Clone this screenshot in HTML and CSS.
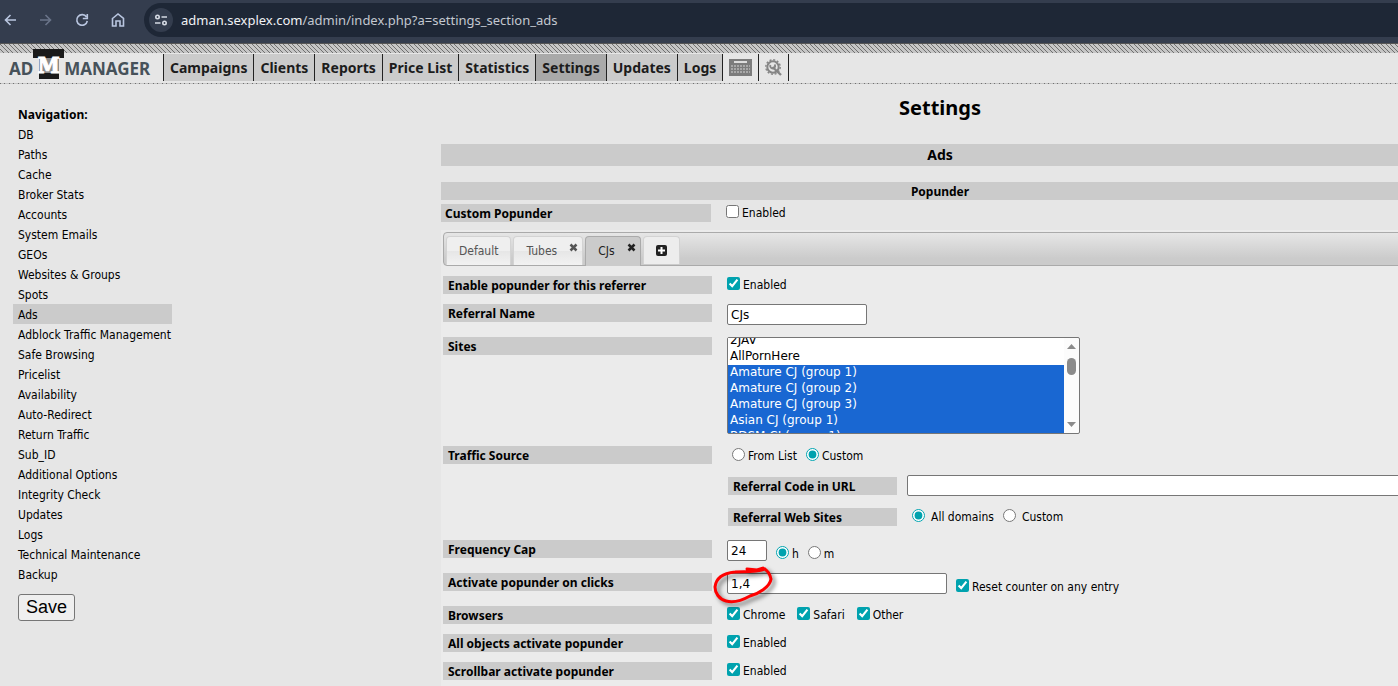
FILE: index.html
```html
<!DOCTYPE html>
<html lang="en">
<head>
    <meta charset="UTF-8">
    <meta name="viewport" content="width=device-width, initial-scale=1.0">
    <title>Ad Manager - Settings</title>
    <link rel="stylesheet" href="styles.css">
</head>
<body>
    <div class="browser-bar">
        <button class="browser-btn" aria-label="Back">
            <svg width="16" height="16" viewBox="0 0 16 16"><path d="M14 8H3.500M8.500 3L3.500 8l5 5"/></svg>
        </button>
        <button class="browser-btn disabled" aria-label="Forward">
            <svg width="16" height="16" viewBox="0 0 16 16"><path d="M2 8h10.500M7.500 3l5 5-5 5"/></svg>
        </button>
        <button class="browser-btn" aria-label="Reload">
            <svg width="16" height="16" viewBox="0 0 16 16"><path d="M12.500 5A5.300 5.300 0 1 0 13.300 9M13.300 2v4.500H8.800"/></svg>
        </button>
        <button class="browser-btn" aria-label="Home">
            <svg width="16" height="16" viewBox="0 0 16 16"><path d="M2.500 6.500L8 2l5.500 4.500V14H10V9H6v5H2.500z"/></svg>
        </button>
        <div class="url-bar">
            <button class="site-info" aria-label="Site information">
                <svg width="14" height="14" viewBox="0 0 14 14"><circle cx="3.500" cy="4" r="1.700"/><path d="M7.500 4H13M1 10h5.500"/><circle cx="10.500" cy="10" r="1.700"/></svg>
            </button>
            <span class="url"><b>adman.sexplex.com</b>/admin/index.php?a=settings_section_ads</span>
        </div>
    </div>
    <div class="hatch"></div>

    <header class="header">
        <a class="logo" href="#" aria-label="Ad Manager">
            <span>AD</span>
            <span class="logo-m">M</span>
            <span>MANAGER</span>
        </a>
        <nav class="menu">
            <a href="#">Campaigns</a>
            <a href="#">Clients</a>
            <a href="#">Reports</a>
            <a href="#">Price List</a>
            <a href="#">Statistics</a>
            <a href="#" class="active">Settings</a>
            <a href="#">Updates</a>
            <a href="#">Logs</a>
            <a href="#" class="icon" aria-label="Keyboard">
                <svg width="23" height="17" viewBox="0 0 23 17" shape-rendering="crispEdges">
                    <path fill="#7c7c7c" d="M0 0h23v17H0z"/>
                    <path fill="#ddd" d="M5 2h13v2H5z"/>
                    <path stroke="#a8a8a8" stroke-width="2" stroke-dasharray="2 1" d="M2 7h19M2 10h19M2 13h19"/>
                </svg>
            </a>
            <a href="#" class="icon" aria-label="Search settings">
                <svg width="17" height="17" viewBox="0 0 17 17" fill="none" stroke="#858585">
                    <circle cx="8" cy="8" r="5.700" stroke-width="2"/>
                    <circle cx="8" cy="8" r="7.200" stroke-width="1.400" stroke-dasharray="2 1.770"/>
                    <path stroke-width="2.400" d="M7.500 8L16 16"/>
                    <path stroke-width="1.800" d="M5.500 6a2.400 2.400 0 1 0 4-.5"/>
                </svg>
            </a>
        </nav>
    </header>
    <div class="hatch thin"></div>

    <div class="page">
        <aside class="sidebar">
            <h2>Navigation:</h2>
            <ul>
                <li><a href="#">DB</a></li>
                <li><a href="#">Paths</a></li>
                <li><a href="#">Cache</a></li>
                <li><a href="#">Broker Stats</a></li>
                <li><a href="#">Accounts</a></li>
                <li><a href="#">System Emails</a></li>
                <li><a href="#">GEOs</a></li>
                <li><a href="#">Websites &amp; Groups</a></li>
                <li><a href="#">Spots</a></li>
                <li><a href="#" class="active">Ads</a></li>
                <li><a href="#">Adblock Traffic Management</a></li>
                <li><a href="#">Safe Browsing</a></li>
                <li><a href="#">Pricelist</a></li>
                <li><a href="#">Availability</a></li>
                <li><a href="#">Auto-Redirect</a></li>
                <li><a href="#">Return Traffic</a></li>
                <li><a href="#">Sub_ID</a></li>
                <li><a href="#">Additional Options</a></li>
                <li><a href="#">Integrity Check</a></li>
                <li><a href="#">Updates</a></li>
                <li><a href="#">Logs</a></li>
                <li><a href="#">Technical Maintenance</a></li>
                <li><a href="#">Backup</a></li>
            </ul>
            <button class="save" type="submit">Save</button>
        </aside>

        <main class="content">
            <h1>Settings</h1>
            <h2 class="section">Ads</h2>
            <h3 class="subsection">Popunder</h3>

            <div class="row outer">
                <div class="label">Custom Popunder</div>
                <div class="controls">
                    <label><input type="checkbox">Enabled</label>
                </div>
            </div>

            <div class="panel">
                <ul class="tabs">
                    <li><a href="#">Default</a></li>
                    <li>
                        <a href="#">Tubes</a>
                        <button class="close" aria-label="Remove Tubes"><svg width="9" height="9" viewBox="0 0 9 9"><path d="M1.500 1.500l6 6M7.500 1.500l-6 6"/></svg></button>
                    </li>
                    <li class="active">
                        <a href="#">CJs</a>
                        <button class="close" aria-label="Remove CJs"><svg width="9" height="9" viewBox="0 0 9 9"><path d="M1.500 1.500l6 6M7.500 1.500l-6 6"/></svg></button>
                    </li>
                    <li class="add">
                        <button aria-label="Add tab"><svg width="11" height="11" viewBox="0 0 11 11"><rect width="11" height="11" rx="2" fill="#222"/><path d="M5.500 2v7M2 5.500h7" stroke="#fff" stroke-width="2"/></svg></button>
                    </li>
                </ul>

                <form class="settings">
                    <div class="row">
                        <div class="label">Enable popunder for this referrer</div>
                        <div class="controls">
                            <label><input type="checkbox" checked>Enabled</label>
                        </div>
                    </div>
                    <div class="row">
                        <label class="label" for="referral">Referral Name</label>
                        <div class="controls field">
                            <input type="text" id="referral" class="w-name" value="CJs">
                        </div>
                    </div>
                    <div class="row">
                        <label class="label" for="sites">Sites</label>
                        <div class="listbox">
                            <select id="sites" multiple>
                                <option></option>
                                <option></option>
                                <option>2JAV</option>
                                <option>AllPornHere</option>
                                <option selected>Amature CJ (group 1)</option>
                                <option selected>Amature CJ (group 2)</option>
                                <option selected>Amature CJ (group 3)</option>
                                <option selected>Asian CJ (group 1)</option>
                                <option selected>BDSM CJ (group 1)</option>
                                <option></option>
                            </select>
                            <div class="scrollbar">
                                <svg width="9" height="5" viewBox="0 0 9 5"><path d="M0 5L4.500 0L9 5z"/></svg>
                                <span class="thumb"></span>
                                <svg width="9" height="5" viewBox="0 0 9 5"><path d="M0 0L4.500 5L9 0z"/></svg>
                            </div>
                        </div>
                    </div>
                    <div class="row">
                        <div class="label">Traffic Source</div>
                        <div class="stack">
                            <div class="controls indent">
                                <label><input type="radio" name="source">From List</label>
                                <label><input type="radio" name="source" checked>Custom</label>
                            </div>
                            <div class="subrow">
                                <label class="label" for="code">Referral Code in URL</label>
                                <input type="text" id="code">
                            </div>
                            <div class="subrow">
                                <div class="label">Referral Web Sites</div>
                                <div class="controls wide">
                                    <label><input type="radio" name="domains" checked>All domains</label>
                                    <label><input type="radio" name="domains">Custom</label>
                                </div>
                            </div>
                        </div>
                    </div>
                    <div class="row">
                        <label class="label" for="cap">Frequency Cap</label>
                        <div class="controls field">
                            <input type="text" id="cap" class="w-cap" value="24">
                            <label><input type="radio" name="unit" checked>h</label>
                            <label><input type="radio" name="unit">m</label>
                        </div>
                    </div>
                    <div class="row">
                        <label class="label" for="clicks">Activate popunder on clicks</label>
                        <div class="controls field">
                            <div class="marked">
                                <input type="text" id="clicks" class="w-clicks" value="1,4">
                                <svg class="scribble" width="70" height="48" viewBox="0 0 70 48"><path d="M34 4L44 5L50 3C54 5 57 9 58 14C57 22 45 29 37 31C28 36 20 38 13 36C6 34 2 28 2 22C3 12 12 8 22 7C30 6 40 8 52 4"/></svg>
                            </div>
                            <label><input type="checkbox" checked>Reset counter on any entry</label>
                        </div>
                    </div>
                    <div class="row">
                        <div class="label">Browsers</div>
                        <div class="controls browsers">
                            <label><input type="checkbox" checked>Chrome</label>
                            <label><input type="checkbox" checked>Safari</label>
                            <label><input type="checkbox" checked>Other</label>
                        </div>
                    </div>
                    <div class="row">
                        <div class="label">All objects activate popunder</div>
                        <div class="controls">
                            <label><input type="checkbox" checked>Enabled</label>
                        </div>
                    </div>
                    <div class="row">
                        <div class="label">Scrollbar activate popunder</div>
                        <div class="controls">
                            <label><input type="checkbox" checked>Enabled</label>
                        </div>
                    </div>
                </form>
            </div>
        </main>
    </div>

    <script>
        document.getElementById('sites').scrollTop = 37;
    </script>
</body>
</html>
```
FILE: styles.css
```css
* {
    box-sizing: border-box;
}
body {
    margin: 0;
    background: #e6e6e6;
    color: #000;
    font: 12px "DejaVu Sans Condensed", "DejaVu Sans", sans-serif;
    overflow: hidden;
}
h1, h2, h3, ul {
    margin: 0;
    padding: 0;
    list-style: none;
}
a {
    color: inherit;
    text-decoration: none;
}
button {
    padding: 0;
    border: 0;
    background: none;
}

/* browser bar */
.browser-bar {
    display: flex;
    align-items: center;
    gap: 20px;
    height: 44px;
    padding: 0 0 3px 2px;
    background: #343d4e;
    border-bottom: 1px solid #555;
}
.browser-btn {
    height: 16px;
}
.browser-btn svg, .site-info svg {
    display: block;
    fill: none;
    stroke: #b9c6e0;
    stroke-width: 1.6;
}
.browser-btn.disabled {
    opacity: 0.4;
}
.site-info svg {
    stroke: #d5dae3;
}
.url-bar {
    display: flex;
    flex: 1;
    align-items: center;
    gap: 8px;
    height: 34px;
    margin: 0 -20px 0 -2px;
    padding-left: 5px;
    border-radius: 17px;
    background: #1e2736;
}
.site-info {
    display: grid;
    place-items: center;
    width: 24px;
    height: 24px;
    border-radius: 50%;
    background: #343d4e;
}
.url {
    color: #c3c8d0;
    font: 13px "Noto Sans", sans-serif;
}
.url b {
    color: #f0f2f5;
    font-weight: normal;
}

/* header */
.hatch {
    height: 9px;
    background: #c6c6c6 url("data:image/svg+xml,%3Csvg xmlns='http://www.w3.org/2000/svg' width='9' height='9'%3E%3Cpath d='M-1-1L10 10M3-1L14 10M-6-1L5 10' stroke='%23707070' fill='none' shape-rendering='crispEdges'/%3E%3C/svg%3E");
}
.hatch.thin {
    height: 1px;
}
.header {
    display: flex;
    height: 30px;
    padding-top: 1px;
}
.logo {
    display: flex;
    align-items: center;
    width: 163px;
    height: 27px;
    padding: 3px 0 2px 9px;
    color: #47525a;
    font: bold 17px "Noto Sans", sans-serif;
}
.logo-m {
    flex: none;
    align-self: flex-end;
    width: 31px;
    height: 30px;
    background: linear-gradient(#1a1a1a, #1a1a1a) top / 31px 9px no-repeat,
                linear-gradient(#1a1a1a, #1a1a1a) bottom / 20px 6px no-repeat,
                linear-gradient(#8a8a8a, #8a8a8a) center / 20px 30px no-repeat;
    color: #fff;
    font: bold 22px/32px "DejaVu Serif Condensed", "DejaVu Serif", serif;
    text-align: center;
    -webkit-text-stroke: 1px #fff;
}
.menu {
    display: flex;
    height: 27px;
    border-right: 1px solid #222;
}
.menu a {
    padding: 0 6px;
    border-left: 1px solid #222;
    background: #cbcbcb;
    color: #1c1c1c;
    font: bold 14px/27px "Noto Sans", sans-serif;
}
.menu a.active {
    background: #a9a9a9;
}
.menu a.icon {
    display: flex;
    align-items: center;
    background: none;
}

/* sidebar */
.page {
    display: flex;
}
.sidebar {
    flex: none;
    width: 441px;
    padding: 20px 13px;
}
.sidebar h2 {
    height: 20px;
    padding-left: 5px;
    font: bold 12px/22px "Noto Sans", sans-serif;
}
.sidebar ul {
    width: 159px;
}
.sidebar li a {
    display: block;
    height: 20px;
    padding-left: 5px;
    line-height: 22px;
    white-space: nowrap;
}
.sidebar li a.active {
    background: #cbcbcb;
}
.save {
    width: 57px;
    height: 27px;
    margin: 10px 5px;
    border: 1px solid #767676;
    border-radius: 3px;
    background: #efefef;
    font: 18px "Liberation Sans", sans-serif;
}

/* content runs past the right edge of the window */
.content {
    flex: 1;
    margin-right: -41px;
}
.content h1, .content h2, .content h3 {
    font-family: "Noto Sans", sans-serif;
    text-align: center;
}
.content h1 {
    padding-top: 10px;
    font-size: 20px;
    line-height: 28px;
}
.section {
    margin-top: 22px;
    background: #cbcbcb;
    font-size: 14px;
    line-height: 22px;
}
.subsection {
    height: 18px;
    margin-top: 16px;
    background: #cbcbcb;
    font-size: 12px;
    line-height: 20px;
}
.row {
    display: grid;
    grid-template-columns: 269px 1fr;
    column-gap: 15px;
    align-items: start;
}
.outer {
    grid-template-columns: 270px 1fr;
    padding: 4px 0 8px;
}
.label {
    height: 18px;
    padding-left: 5px;
    background: #cbcbcb;
    font: bold 12px/20px "Noto Sans", sans-serif;
}
.outer .label {
    padding-left: 4px;
}
.controls {
    display: flex;
    gap: 9px;
}
.controls label {
    display: flex;
    gap: 3px;
    height: 18px;
    line-height: 18px;
}
.controls label input {
    width: 13px;
    height: 13px;
    margin: 1px 0 0;
    accent-color: #00a2ae;
}
.stack {
    display: grid;
    gap: 10px;
    padding-bottom: 3px;
}
.indent {
    height: 19px;
    padding: 1px 0 0 5px;
}
.subrow {
    display: grid;
    grid-template-columns: 169px 1fr;
    gap: 10px;
    align-items: center;
    height: 21px;
    padding-left: 1px;
}
.wide label {
    gap: 6px;
}
.wide {
    padding-left: 5px;
}
.field {
    align-items: flex-end;
    height: 23px;
}
input[type="text"] {
    height: 21px;
    padding: 0 3px;
    border: 1px solid #767676;
    border-radius: 2px;
    background: #fff;
    font: 12px "DejaVu Sans", sans-serif;
}
.field input[type="text"] {
    align-self: flex-start;
}
.w-name {
    width: 140px;
}
.w-cap {
    width: 40px;
}
.w-clicks {
    display: block;
    width: 220px;
}
.browsers {
    gap: 12px;
}

/* tabs */
.panel {
    padding: 2px 0 0 2px;
    background: #ebebeb;
}
.tabs {
    display: flex;
    gap: 2px;
    height: 34px;
    padding: 3px 2px 0;
    border: 1px solid #aaa;
    border-radius: 4px;
    background: linear-gradient(#e6e6e6, #cbcbcb 80%);
}
.tabs li {
    display: flex;
    height: 29px;
    padding: 0 12px;
    border: 1px solid #d3d3d3;
    border-bottom: 0;
    border-radius: 4px 4px 0 0;
    background: linear-gradient(#efefef 50%, #e6e6e6 50%, #f2f2f2);
    color: #555;
    line-height: 28px;
}
.tabs li.active {
    height: 30px;
    border-color: #aaa;
    background: #cbcbcb;
    color: #212121;
}
.tabs li:has(.close) {
    padding: 0 4px 0 12px;
}
.close {
    align-self: flex-start;
    height: 9px;
    margin: 6px 0 0 12px;
}
.close svg, .add svg {
    display: block;
}
.close path {
    stroke: #555;
    stroke-width: 2.5;
}
.active .close path {
    stroke: #222;
}
.tabs .add {
    align-items: center;
    height: 28px;
    padding: 0 12px;
    background: #ededed;
}
.settings {
    display: grid;
    gap: 10px;
    padding: 10px 0 20px;
}

/* site list */
.listbox {
    display: flex;
    width: 353px;
    height: 97px;
    margin-bottom: 2px;
    border: 1px solid #767676;
    border-radius: 2px;
    background: #fcfcfc;
}
.listbox select {
    flex: 1;
    height: 95px;
    padding: 0;
    border: 0;
    border-radius: 0;
    outline: 0;
    background: #fff;
    font: 12px "DejaVu Sans", sans-serif;
    scrollbar-width: none;
}
.listbox option {
    height: 16px;
    min-height: 16px;
    padding: 0 2px;
    line-height: 16px;
}
.listbox option:checked {
    background: #1967d2 linear-gradient(#1967d2, #1967d2);
    color: #fff;
}
.scrollbar {
    display: flex;
    flex-direction: column;
    align-items: center;
    width: 15px;
    padding: 6px 0;
}
.scrollbar path {
    fill: #8b8b8b;
}
.thumb {
    width: 9px;
    height: 17px;
    margin: 9px 0 auto;
    border-radius: 5px;
    background: #8b8b8b;
}

/* hand-drawn mark over the clicks field */
.marked {
    position: relative;
    align-self: flex-start;
}
.scribble {
    position: absolute;
    left: -14px;
    top: -8px;
    fill: none;
    stroke: #f00;
    stroke-width: 3;
    stroke-linecap: round;
    filter: drop-shadow(3px 3px 2px rgba(0, 0, 0, 0.5));
    pointer-events: none;
}
```
